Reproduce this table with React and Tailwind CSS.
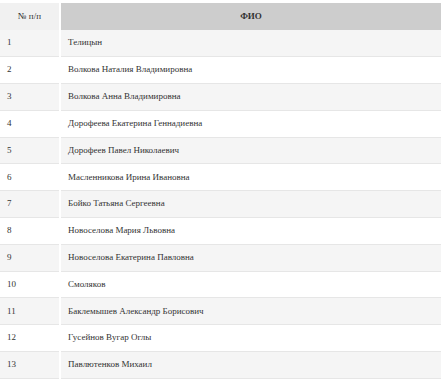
import React from "react";

const people = [
  "Телицын",
  "Волкова Наталия Владимировна",
  "Волкова Анна Владимировна",
  "Дорофеева Екатерина Геннадиевна",
  "Дорофеев Павел Николаевич",
  "Масленникова Ирина Ивановна",
  "Бойко Татьяна Сергеевна",
  "Новоселова Мария Львовна",
  "Новоселова Екатерина Павловна",
  "Смоляков",
  "Баклемышев Александр Борисович",
  "Гусейнов Вугар Оглы",
  "Павлютенков Михаил",
];

export default function App() {
  return (
    <div className="w-[447px] h-[385px] bg-white pt-[3px] overflow-hidden font-[Liberation_Serif,Times_New_Roman,serif] text-[9px] text-[#333]">
      <table className="w-[441px] border-collapse">
        <thead>
          <tr className="h-[27px]">
            <th className="w-[60px] bg-[#f1f1f1] border-r-2 border-white font-normal text-center">
              № п/п
            </th>
            <th className="bg-[#cdcdcd] font-bold text-center">ФИО</th>
          </tr>
        </thead>
        <tbody>
          {people.map((name, i) => (
            <tr
              key={i}
              className={`h-[26.8px] border-b border-[#e6e6e6] ${
                i % 2 === 0 ? "bg-[#f5f5f5]" : "bg-white"
              }`}
            >
              <td className="pl-[7px] border-r-2 border-white">{i + 1}</td>
              <td className="pl-[7px]">{name}</td>
            </tr>
          ))}
        </tbody>
      </table>
    </div>
  );
}
